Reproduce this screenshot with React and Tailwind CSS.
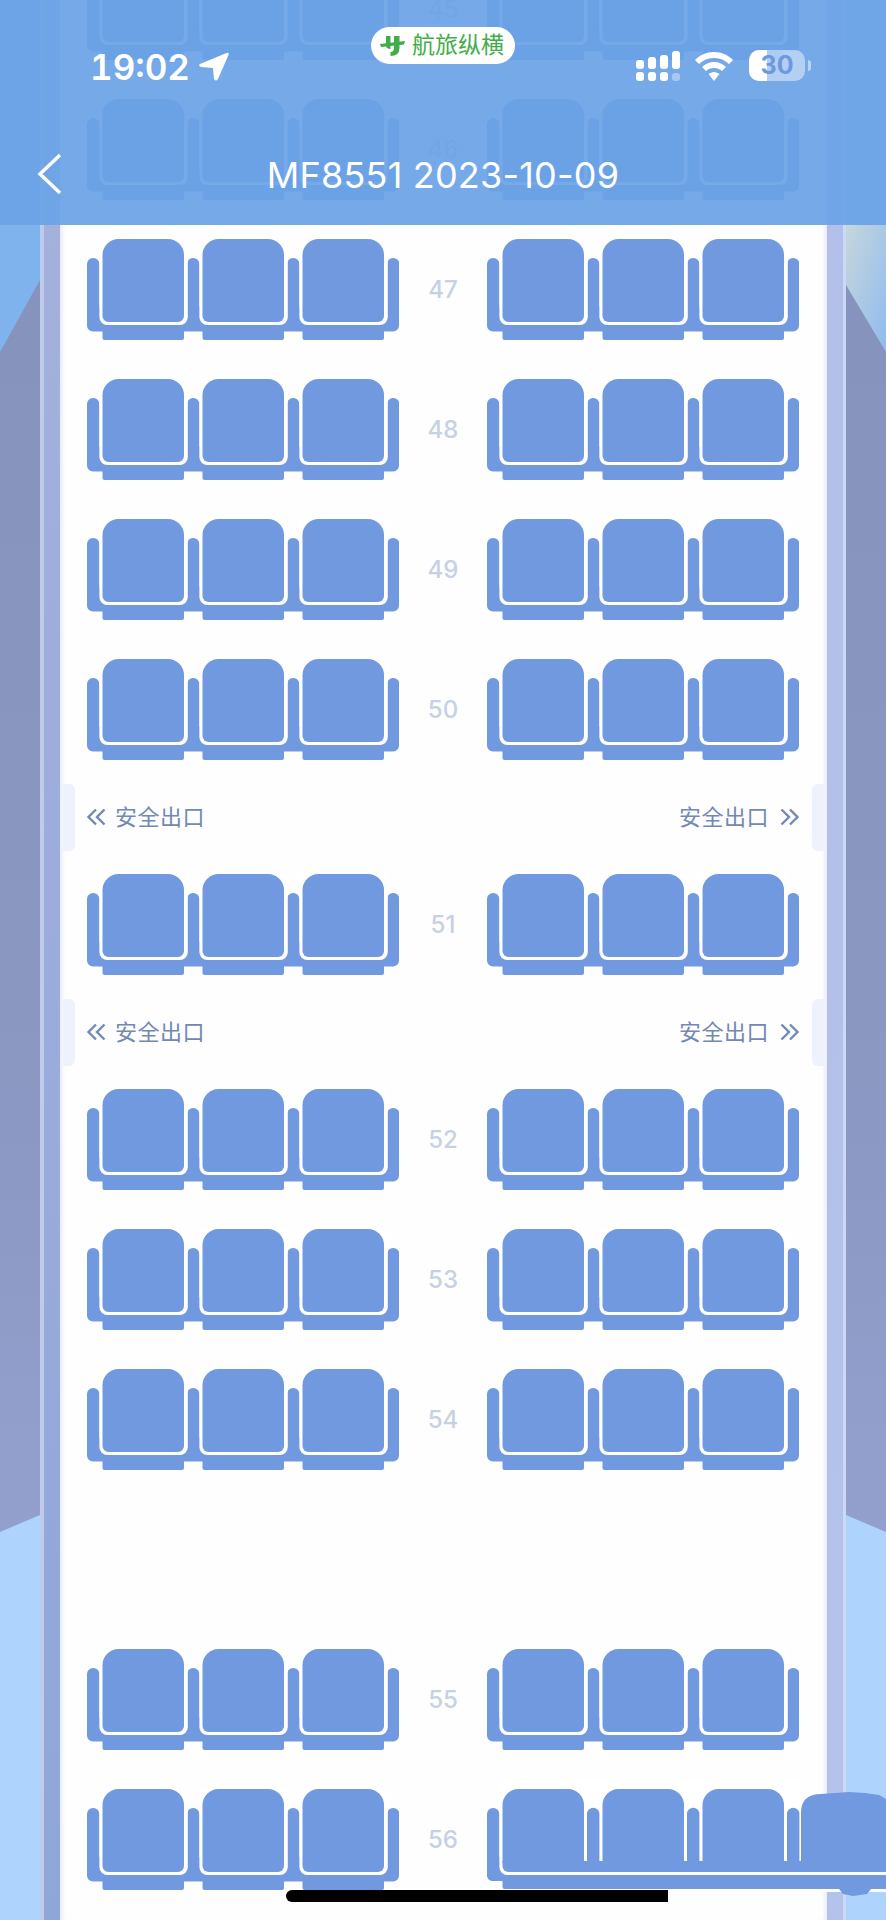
const SEAT = '#7099e0'
const FONT = "font-['Inter','Noto_Sans_CJK_SC',sans-serif]"

const ROWS = [
  { n: 45 },
  { n: 46 },
  { n: 47 },
  { n: 48 },
  { n: 49 },
  { n: 50, after: 'exit' },
  { n: 51, after: 'exit' },
  { n: 52 },
  { n: 53 },
  { n: 54, after: 'gap' },
  { n: 55 },
  { n: 56, merged: true },
]

const SEAT_X = [0, 100, 200]
const ARM_X = [0, 100, 200, 300]

function SeatBlock() {
  return (
    <svg width="312" height="101" viewBox="0 0 312 101" className="block shrink-0">
      <rect x="0" y="68" width="312" height="24.5" rx="6" fill={SEAT} />
      {ARM_X.map(x => (
        <rect key={x} x={x} y="19" width="12.4" height="70" rx="6" fill={SEAT} />
      ))}
      {SEAT_X.map(x => (
        <g key={x}>
          <rect x={x + 12.4} y="-10" width="88.4" height="96" rx="8" fill="#fff" />
          <path d={`M${x + 15.5} 16 a16 16 0 0 1 16 -16 h49.5 a16 16 0 0 1 16 16 v61 a6 6 0 0 1 -6 6 h-69.5 a6 6 0 0 1 -6 -6 z`} fill={SEAT} />
          <path d={`M${x + 15.5} 86 h81.5 v13 a2 2 0 0 1 -2 2 h-77.5 a2 2 0 0 1 -2 -2 z`} fill={SEAT} />
        </g>
      ))}
    </svg>
  )
}

// last row on the right: retouched in the shot, seats run together up to the screen edge
function MergedSeatBlock() {
  return (
    <svg width="399" height="108" viewBox="0 0 399 108" className="relative z-10 block shrink-0 overflow-visible">
      {/* frame, foot and the lump under the blob */}
      <rect x="0" y="19" width="12.4" height="73" rx="6" fill={SEAT} />
      <rect x="0" y="68" width="399" height="24" rx="6" fill={SEAT} />
      <rect x="336" y="100" width="63" height="3" fill="#fff" />
      <path d="M15.5 85 H399 V100 H384 L380 105 L366 107 L356 105 L352 100 H17.500 a2 2 0 0 1 -2 -2 z" fill={SEAT} />
      {/* white line round the cushions */}
      <rect x="12.4" y="-10" width="301.600" height="96" rx="8" fill="#fff" />
      <rect x="300" y="83" width="99" height="3" fill="#fff" />
      {/* arms between the seats */}
      {ARM_X.slice(1).map(x => (
        <path key={x} d={`M${x} 25 a6.200 6.200 0 0 1 12.4 0 V74 H${x} z`} fill={SEAT} />
      ))}
      {/* cushions, joined by one band */}
      {SEAT_X.map(x => (
        <path key={x} d={`M${x + 15.5} 16 a16 16 0 0 1 16 -16 h49.5 a16 16 0 0 1 16 16 V74 H${x + 15.5} z`} fill={SEAT} />
      ))}
      <path d="M15.500 72 H399 V83 H21.500 a6 6 0 0 1 -6 -6 z" fill={SEAT} />
      <path d="M314 72 V24 Q314 5 334 5 L362 3 L378 4 L392 6 L399 10 V72 z" fill={SEAT} />
    </svg>
  )
}

function ExitChevrons({ flip }) {
  return (
    <svg width="20" height="18" viewBox="0 0 20 18" fill="none" stroke="#7288b5" strokeWidth="2.400" className={flip ? 'block rotate-180' : 'block'}>
      <path d="M10 1.500 L2.500 9 L10 16.500" />
      <path d="M18.500 1.500 L11 9 L18.500 16.500" />
    </svg>
  )
}

function ExitRow() {
  return (
    <div className="flex h-[114px] items-center justify-between pl-[3px] text-[22px] leading-none text-[#7288b5]">
      <div className="h-[67px] w-[12px] rounded-r-[6px] bg-[#edf2fc]" />
      <div className="ml-[11px] flex items-center gap-[9px]">
        <ExitChevrons />
        <span className="tracking-[0.5px]">安全出口</span>
      </div>
      <div className="ml-auto mr-[12px] flex items-center gap-[11px]">
        <span className="tracking-[0.5px]">安全出口</span>
        <ExitChevrons flip />
      </div>
      <div className="h-[67px] w-[15px] rounded-l-[6px] bg-[#edf2fc]" />
    </div>
  )
}

function SeatRow({ row }) {
  return (
    <div className="flex h-[101px] items-start pl-[27px]">
      <SeatBlock />
      <div className="flex h-[101px] w-[88px] shrink-0 items-center justify-center text-[24px] font-medium text-[#c6d1e4]">
        {row.n}
      </div>
      {row.merged ? <MergedSeatBlock /> : <SeatBlock />}
    </div>
  )
}

function SideLeft() {
  return (
    <svg width="40" height="1920" className="block shrink-0">
      <defs>
        <linearGradient id="wingL" x1="0" y1="0" x2="0" y2="1">
          <stop offset="0" stopColor="#8693bc" />
          <stop offset="0.6" stopColor="#8a97c1" />
          <stop offset="1" stopColor="#939fcd" />
        </linearGradient>
      </defs>
      <rect width="40" height="1920" fill="#aed4fd" />
      <rect width="40" height="400" fill="#7fb3ee" />
      <polygon points="0,352 40,280 40,1515 0,1532" fill="url(#wingL)" />
    </svg>
  )
}

function SideRight() {
  return (
    <svg width="40" height="1920" className="block shrink-0">
      <defs>
        <linearGradient id="skyR" x1="0" y1="0" x2="1" y2="1">
          <stop offset="0" stopColor="#c6d6dc" />
          <stop offset="1" stopColor="#8fbbee" />
        </linearGradient>
        <linearGradient id="wingR" x1="0" y1="0" x2="0" y2="1">
          <stop offset="0" stopColor="#8693bc" />
          <stop offset="0.6" stopColor="#8a97c1" />
          <stop offset="1" stopColor="#939fcd" />
        </linearGradient>
      </defs>
      <rect width="40" height="1920" fill="#aed4fd" />
      <rect y="225" width="40" height="130" fill="url(#skyR)" />
      <polygon points="0,285 40,352 40,1532 0,1515" fill="url(#wingR)" />
    </svg>
  )
}

function StatusBar() {
  return (
    <div className="flex h-[100px] items-start">
      <div className="ml-[90px] mt-[47px] flex w-[281px] shrink-0 items-center gap-[8px]">
        <span className="text-[35px] font-semibold leading-[40px] tabular-nums text-white">19:02</span>
        <svg width="31" height="30" viewBox="0 0 31 30" className="block">
          <path d="M2 12 L28.500 1 Q31.500 0 30.500 3 L20 27 Q18 30 16 27 L15 16 L3 15 Q0 13.500 2 12 Z" fill="#fff" />
        </svg>
      </div>
      <div className="mt-[27px] flex h-[37px] w-[144px] shrink-0 items-center gap-[7px] rounded-full bg-white pl-[9px]">
        <svg width="25" height="21" viewBox="0 0 25 21" fill="#3fae49" className="block shrink-0">
          <path d="M6 1 h4.500 v13 q-4 0 -4.500 -3 z" />
          <path d="M14 1 h5.500 v12 q0 8 -9 8 v-4 q3.500 0 3.500 -4 z" />
          <path d="M0 9 L25 6 L24 9.500 L1 12 z" />
        </svg>
        <span className="text-[23px] font-normal leading-none text-[#3fae49]">航旅纵横</span>
      </div>
      <div className="ml-[121px] mt-[50px] flex shrink-0 items-start">
        <svg width="44" height="31" viewBox="0 0 44 31" fill="#fff" className="block">
          <rect x="0" y="10" width="8" height="9" rx="3" />
          <rect x="0" y="22" width="8" height="9" rx="3" />
          <rect x="12" y="7" width="8" height="12" rx="3" />
          <rect x="12" y="22" width="8" height="9" rx="3" />
          <rect x="24" y="5" width="8" height="14" rx="3" />
          <rect x="24" y="22" width="8" height="9" rx="3" />
          <rect x="36" y="1" width="8" height="18" rx="3" />
          <rect x="36" y="23" width="8" height="8" rx="3" fill="#a9c8f0" />
        </svg>
        <svg width="38" height="29" viewBox="0 0 38 29" fill="#fff" className="ml-[15px] mt-[2px] block">
          <path d="M19 0 C27 0 33 3 38 8 L34 12 C30 8 25 6 19 6 C13 6 8 8 4 12 L0 8 C5 3 11 0 19 0 Z" />
          <path d="M19 10 C24 10 28 12 31 15 L27 19 C25 17 22 16 19 16 C16 16 13 17 11 19 L7 15 C10 12 14 10 19 10 Z" />
          <path d="M19 20 C21 20 23 21 24.500 22 L19 29 L13.500 22 C15 21 17 20 19 20 Z" />
        </svg>
        <div className="relative ml-[16px] flex h-[31px] w-[56px] items-center justify-center overflow-hidden rounded-[10px] bg-white/45">
          <div className="absolute inset-y-0 left-0 w-[18px] bg-white" />
          <span className="relative text-[25px] font-bold leading-none text-[#6c9ae0]">30</span>
        </div>
        <div className="ml-[3px] mt-[10px] h-[11px] w-[3px] rounded-r-full bg-white/50" />
      </div>
    </div>
  )
}

function Header() {
  return (
    <div className="absolute inset-x-0 top-0 h-[225px] bg-[#6aa3e6]/93">
      <StatusBar />
      <div className="relative flex h-[125px] items-start justify-center pt-[50px]">
        <svg width="26" height="42" viewBox="0 0 26 42" fill="none" stroke="#fff" strokeWidth="3.500" className="absolute left-[37px] top-[53px] block">
          <path d="M23 2 L3 21 L23 40" />
        </svg>
        <div className="text-[36px] font-normal leading-[50px] tracking-[0.2px] text-white">MF8551 2023-10-09</div>
      </div>
    </div>
  )
}

export default function App() {
  return (
    <div className={`relative h-[1920px] w-[886px] overflow-hidden bg-white ${FONT}`}>
      <div className="flex h-full">
        <SideLeft />
        <div className="h-full w-[4px] shrink-0 bg-[#c0cbec]" />
        <div className="h-full w-[16px] shrink-0 bg-gradient-to-b from-[#a6b2dc] to-[#8fa6d9]" />
        <div className="h-full w-[767px] shrink-0 bg-[#fefefe] shadow-[inset_5px_0_4px_-3px_#e4e9f6,inset_-5px_0_4px_-3px_#e4e9f6]">
          <div className="-mt-[41px] flex flex-col">
            {ROWS.map(row => (
              <div key={row.n}>
                <SeatRow row={row} />
                {row.after === 'exit' && <ExitRow />}
                {row.after === 'gap' && <div className="h-[179px]" />}
                {!row.after && <div className="h-[39px]" />}
              </div>
            ))}
          </div>
        </div>
        <div className="h-full w-[16px] shrink-0 bg-gradient-to-b from-[#b3bfe8] to-[#b3c3ec]" />
        <div className="h-full w-[3px] shrink-0 bg-[#cdd8f5]" />
        <SideRight />
      </div>
      <Header />
      {/* home indicator */}
      <div className="absolute bottom-[18px] left-[286px] z-20 h-[12px] w-[382px] rounded-l-full bg-black" />
    </div>
  )
}
